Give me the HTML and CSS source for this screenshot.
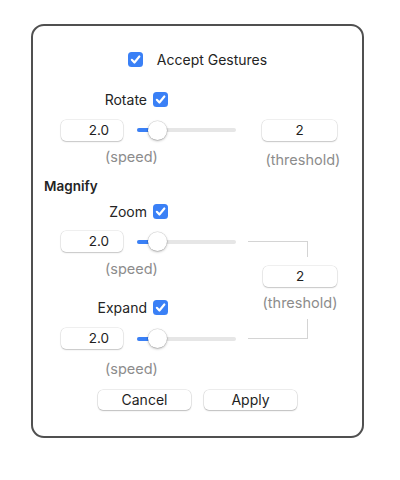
FILE: index.html
```html
<!DOCTYPE html>
<html>
<head>
<meta charset="utf-8">
<link rel="stylesheet" href="styles.css">
</head>
<body>
<div class="window">
  <div class="header">
    <span class="check"><svg viewBox="0 0 14 14"><path d="M3.6 7.3 L6 9.8 L10.6 4.2"/></svg></span>
    <span class="header-label">Accept Gestures</span>
  </div>

  <div class="toggle-row rotate">
    <span class="toggle-label">Rotate</span>
    <span class="check"><svg viewBox="0 0 14 14"><path d="M3.6 7.3 L6 9.8 L10.6 4.2"/></svg></span>
  </div>

  <div class="control-row">
    <div class="field num">2.0</div>
    <div class="slider"><div class="fill"></div><div class="knob"></div></div>
    <div class="field center thresh">2</div>
  </div>
  <div class="caption-row">
    <span class="caption speed">(speed)</span>
    <span class="caption thresh-cap">(threshold)</span>
  </div>

  <div class="section-title">Magnify</div>

  <div class="toggle-row zoom">
    <span class="toggle-label">Zoom</span>
    <span class="check"><svg viewBox="0 0 14 14"><path d="M3.6 7.3 L6 9.8 L10.6 4.2"/></svg></span>
  </div>

  <div class="magnify">
    <div class="mag-left">
      <div class="control-row m1">
        <div class="field num">2.0</div>
        <div class="slider"><div class="fill"></div><div class="knob"></div></div>
      </div>
      <div class="caption speed m-speed1">(speed)</div>
      <div class="toggle-row expand">
        <span class="toggle-label">Expand</span>
        <span class="check"><svg viewBox="0 0 14 14"><path d="M3.6 7.3 L6 9.8 L10.6 4.2"/></svg></span>
      </div>
      <div class="control-row m2">
        <div class="field num">2.0</div>
        <div class="slider"><div class="fill"></div><div class="knob"></div></div>
      </div>
      <div class="caption speed m-speed2">(speed)</div>
    </div>
    <div class="mag-right">
      <div class="bracket top"></div>
      <div class="field center mthresh">2</div>
      <div class="caption mthresh-cap">(threshold)</div>
      <div class="bracket bottom"></div>
    </div>
  </div>

  <div class="buttons">
    <div class="btn">Cancel</div>
    <div class="btn">Apply</div>
  </div>
</div>
</body>
</html>
```
FILE: styles.css
```css
html, body {
  margin: 0;
  padding: 0;
  background: #ffffff;
}
body {
  font-family: Inter, "Liberation Sans", Arial, sans-serif;
  font-size: 13px;
  color: #242424;
  width: 400px;
  height: 480px;
  overflow: hidden;
}
.window {
  box-sizing: border-box;
  margin: 24px 0 0 31px;
  width: 333px;
  height: 414px;
  border: 2px solid #505050;
  border-radius: 13px;
  background: #ffffff;
  display: flex;
  flex-direction: column;
}

/* checkbox */
.check {
  width: 15px;
  height: 15px;
  border-radius: 3.5px;
  background: #3a80f6;
  display: flex;
  align-items: center;
  justify-content: center;
  flex: none;
}
.check svg {
  width: 15px;
  height: 15px;
  fill: none;
  stroke: #ffffff;
  stroke-width: 2;
  stroke-linecap: round;
  stroke-linejoin: round;
}

.header {
  margin-top: 23px;
  height: 20px;
  display: flex;
  align-items: center;
  justify-content: center;
  gap: 14px;
}
.header-label {
  font-size: 14px;
}

.toggle-row {
  height: 20px;
  display: flex;
  align-items: center;
  gap: 6px;
}
.toggle-label {
  width: 114px;
  text-align: right;
  font-size: 14px;
}
.toggle-row.rotate { margin-top: 20px; }
.toggle-row.zoom { margin-top: 6px; }
.toggle-row.expand { margin-top: 20px; }

.control-row {
  margin-top: 10px;
  height: 22px;
  padding-left: 28px;
  display: grid;
  grid-template-columns: 62px 99px 87px;
  column-gap: 14px;
  align-items: center;
}
.control-row .thresh {
  margin-left: 12px;
}

.field {
  box-sizing: border-box;
  height: 21px;
  background: #ffffff;
  border-radius: 5px;
  box-shadow: 0 0 0 0.5px rgba(0,0,0,0.12), 0 1px 1.5px rgba(0,0,0,0.18);
  font-size: 13.5px;
  line-height: 21px;
  color: #1e1e1e;
}
.field.num {
  text-align: right;
  padding-right: 14px;
}
.field.center {
  text-align: center;
}

.slider {
  position: relative;
  height: 4px;
  border-radius: 2px;
  background: #e6e6e6;
}
.slider .fill {
  width: 18px;
  height: 4px;
  border-radius: 2px;
  background: #3a80f6;
}
.slider .knob {
  position: absolute;
  left: 11px;
  top: -7.5px;
  width: 19px;
  height: 19px;
  border-radius: 50%;
  background: #ffffff;
  box-shadow: 0 0 0 0.5px rgba(0,0,0,0.14), 0 1px 2.5px rgba(0,0,0,0.3);
}

.caption {
  font-size: 14.5px;
  line-height: 16px;
  color: #8c8c8c;
}
.caption-row {
  height: 36px;
  display: flex;
  align-items: flex-start;
}
.caption-row .speed {
  margin-left: 72px;
  margin-top: 8px;
}
.caption-row .thresh-cap {
  margin-left: 107px;
  margin-top: 11px;
  width: 76px;
  text-align: center;
}

.section-title {
  height: 18px;
  line-height: 18px;
  padding-left: 11px;
  font-weight: 600;
  font-size: 13.5px;
}

.magnify {
  display: grid;
  grid-template-columns: 215px 89px;
  align-items: start;
}
.mag-left {
  display: flex;
  flex-direction: column;
}
.control-row.m1 { margin-top: 10px; height: 21px; grid-template-columns: 62px 99px; }
.control-row.m2 { margin-top: 11px; height: 21px; grid-template-columns: 62px 99px; }
.m-speed1 { margin-top: 9px; margin-left: 72px; }
.m-speed2 { margin-top: 12px; margin-left: 72px; }

.mag-right {
  margin-top: 20px;
  display: flex;
  flex-direction: column;
}
.bracket {
  box-sizing: border-box;
  width: 60px;
  border-right: 1px solid #d4d4d4;
}
.bracket.top {
  height: 16px;
  border-top: 1px solid #d4d4d4;
}
.bracket.bottom {
  margin-top: 8px;
  height: 20px;
  border-bottom: 1px solid #d4d4d4;
}
.mthresh {
  margin-top: 9px;
  margin-left: 15px;
  width: 74px;
}
.mthresh-cap {
  margin-top: 8px;
  margin-left: 14px;
  width: 76px;
  text-align: center;
}

.buttons {
  margin-top: 13px;
  display: flex;
  justify-content: center;
  gap: 13px;
}
.btn {
  width: 93px;
  height: 20px;
  line-height: 20px;
  text-align: center;
  background: #ffffff;
  border-radius: 5px;
  box-shadow: 0 0 0 0.5px rgba(0,0,0,0.14), 0 1px 1.5px rgba(0,0,0,0.2);
  font-size: 14px;
  color: #1e1e1e;
}
```
